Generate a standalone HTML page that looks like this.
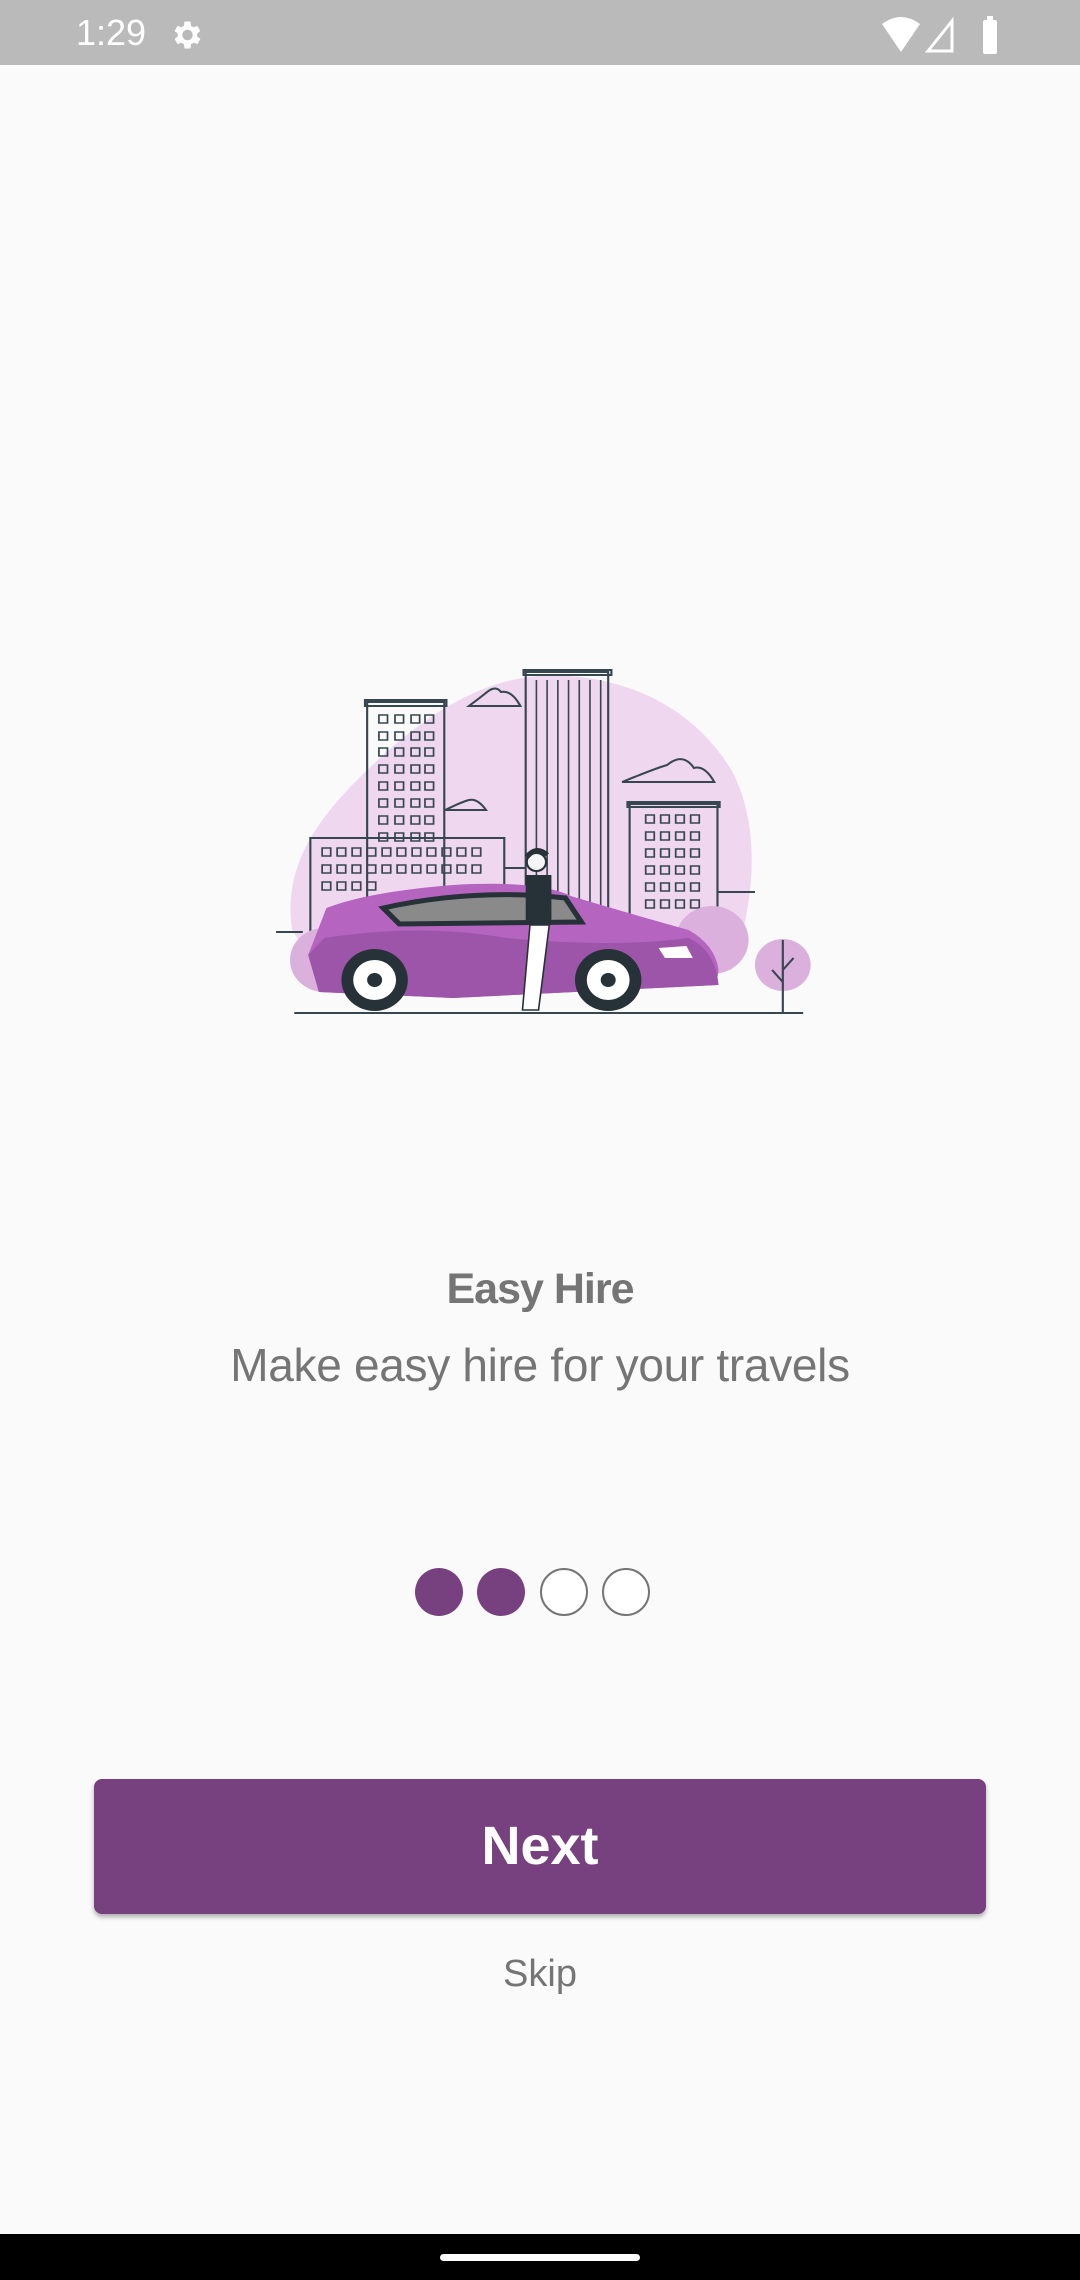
<!DOCTYPE html>
<html><head><meta charset="utf-8"><style>
*{margin:0;padding:0;box-sizing:border-box}
body{width:1080px;height:2280px;background:#fafafa;position:relative;overflow:hidden;font-family:"Liberation Sans",sans-serif}
.sb{position:absolute;left:0;top:0;width:1080px;height:65px;background:#bababa;color:#fff}
.t{position:absolute;text-align:center;width:1080px;left:0;color:#757575}
.dot{position:absolute;width:48px;height:48px;border-radius:50%;top:1568px}
.f{background:#77417f}
.e{background:#fff;border:2px solid #757575}
.btn{position:absolute;left:94px;top:1779px;width:892px;height:135px;background:#77417f;border-radius:8px;box-shadow:0 3px 5px rgba(0,0,0,.3);color:#fff;font-weight:bold;font-size:54px;text-align:center;line-height:135px}
.nav{position:absolute;left:0;top:2234px;width:1080px;height:46px;background:#000}
</style></head><body>
<div class="sb">
<div style="position:absolute;left:76px;top:12px;font-size:36px">1:29</div>
<svg style="position:absolute;left:168px;top:16px" width="36" height="38" viewBox="0 0 24 24"><path fill="#fff" d="M19.4 13a7.5 7.5 0 000-2l2.1-1.6-2-3.5-2.5 1a7 7 0 00-1.7-1L15 3h-4l-.4 2.9a7 7 0 00-1.7 1l-2.5-1-2 3.5L6.5 11a7.5 7.5 0 000 2l-2.1 1.6 2 3.5 2.5-1a7 7 0 001.7 1L11 21h4l.4-2.9a7 7 0 001.7-1l2.5 1 2-3.5zM13 15.5a3.5 3.5 0 110-7 3.5 3.5 0 010 7z"/></svg>
<svg style="position:absolute;left:880px;top:16px" width="125" height="40" viewBox="0 0 125 40"><path fill="#fff" d="M2 8Q21-6 40 8L21 36Z"/><path fill="none" stroke="#fff" stroke-width="3" d="M48 35L72 5V35Z"/><rect x="103" y="4" width="14" height="34" rx="2" fill="#fff"/><rect x="107" y="0" width="6" height="5" fill="#fff"/></svg>
</div>
<svg style="position:absolute;left:260px;top:640px" width="560" height="390" viewBox="0 0 522.7 390" preserveAspectRatio="none">
<path d="M30 290C20 220 60 170 110 120C160 70 210 40 260 36C330 32 400 60 440 130C470 190 460 270 440 330L60 340Z" fill="#efd7ef"/>
<g fill="none" stroke="#37474f" stroke-width="2">
<rect x="100" y="62" width="72" height="240"/><rect x="98" y="60" width="76" height="6"/>
<rect x="47" y="198" width="181" height="110"/>
<rect x="248" y="32" width="77" height="280"/><rect x="246" y="30" width="82" height="5"/>
<rect x="345" y="164" width="82" height="150"/><rect x="343" y="162" width="86" height="5"/>
<path d="M228 228H248M427 252H462M15 292H40"/>
<path d="M195 66H243Q235 50 225 52Q220 45 212 52Q205 58 195 66Z"/>
<path d="M173 170H211Q203 158 195 160Q188 162 173 170Z"/>
<path d="M338 142H424Q415 125 405 128Q395 112 380 125Q370 128 338 142Z"/>
</g>
<g stroke="#37474f" stroke-width="1.5" fill="none">
<path d="M258 40V300M268 40V300M278 40V300M288 40V300M298 40V300M308 40V300M318 40V300"/>
</g>
<g fill="none" stroke="#37474f" stroke-width="1.6">
<path d="M111 75h8v8h-8zM126 75h8v8h-8zM141 75h8v8h-8zM154 75h8v8h-8zM111 92h8v8h-8zM126 92h8v8h-8zM141 92h8v8h-8zM154 92h8v8h-8zM111 108h8v8h-8zM126 108h8v8h-8zM141 108h8v8h-8zM154 108h8v8h-8zM111 125h8v8h-8zM126 125h8v8h-8zM141 125h8v8h-8zM154 125h8v8h-8zM111 142h8v8h-8zM126 142h8v8h-8zM141 142h8v8h-8zM154 142h8v8h-8zM111 159h8v8h-8zM126 159h8v8h-8zM141 159h8v8h-8zM154 159h8v8h-8zM111 176h8v8h-8zM126 176h8v8h-8zM141 176h8v8h-8zM154 176h8v8h-8zM111 193h8v8h-8zM126 193h8v8h-8zM141 193h8v8h-8zM154 193h8v8h-8z"/>
<path d="M58 208h8v8h-8zM72 208h8v8h-8zM86 208h8v8h-8zM100 208h8v8h-8zM114 208h8v8h-8zM128 208h8v8h-8zM142 208h8v8h-8zM156 208h8v8h-8zM170 208h8v8h-8zM184 208h8v8h-8zM198 208h8v8h-8zM58 225h8v8h-8zM72 225h8v8h-8zM86 225h8v8h-8zM100 225h8v8h-8zM114 225h8v8h-8zM128 225h8v8h-8zM142 225h8v8h-8zM156 225h8v8h-8zM170 225h8v8h-8zM184 225h8v8h-8zM198 225h8v8h-8zM58 242h8v8h-8zM72 242h8v8h-8zM86 242h8v8h-8zM100 242h8v8h-8z"/>
<path d="M360 175h8v8h-8zM374 175h8v8h-8zM388 175h8v8h-8zM402 175h8v8h-8zM360 192h8v8h-8zM374 192h8v8h-8zM388 192h8v8h-8zM402 192h8v8h-8zM360 209h8v8h-8zM374 209h8v8h-8zM388 209h8v8h-8zM402 209h8v8h-8zM360 226h8v8h-8zM374 226h8v8h-8zM388 226h8v8h-8zM402 226h8v8h-8zM360 243h8v8h-8zM374 243h8v8h-8zM388 243h8v8h-8zM402 243h8v8h-8zM360 260h8v8h-8zM374 260h8v8h-8zM388 260h8v8h-8zM402 260h8v8h-8z"/>
</g>
<circle cx="60" cy="320" r="32" fill="#dcb0dc"/>
<circle cx="422" cy="300" r="34" fill="#dcb0dc"/>
<circle cx="488" cy="325" r="26" fill="#dcb0dc"/>
<path d="M488 300V372M488 330L498 318M488 342L478 330" stroke="#37474f" stroke-width="2"/>
<path d="M45 315L62 268Q100 252 180 245Q260 240 290 256Q340 272 400 290Q425 305 428 330L426 345L180 358L55 352Z" fill="#b565c0"/>
<path d="M45 315L60 298Q150 283 230 298Q330 308 400 298Q425 310 428 345L180 358L55 352Z" fill="#9c55a8"/>
<path d="M115 268Q200 248 285 258L300 282L130 284Z" fill="#8a8a8a" stroke="#263238" stroke-width="5"/>
<path d="M372 308L398 306L404 318L378 318Z" fill="#fff"/>
<rect x="248" y="235" width="24" height="50" fill="#263238"/>
<path d="M252 285L245 370L260 370L270 285Z" fill="#fff" stroke="#263238" stroke-width="1.5"/>
<circle cx="258" cy="222" r="9" fill="#f5f5f5" stroke="#263238" stroke-width="2"/>
<path d="M249 217Q258 205 268 215" stroke="#263238" stroke-width="5" fill="none"/>
<circle cx="107" cy="340" r="31" fill="#263238"/><circle cx="107" cy="340" r="20" fill="#fff"/><circle cx="107" cy="340" r="7" fill="#263238"/>
<circle cx="325" cy="340" r="31" fill="#263238"/><circle cx="325" cy="340" r="20" fill="#fff"/><circle cx="325" cy="340" r="7" fill="#263238"/>
<path d="M32 373H507" stroke="#37474f" stroke-width="2"/>
</svg>
<div class="t" style="top:1265px;font-size:43px;font-weight:bold;letter-spacing:-1px">Easy Hire</div>
<div class="t" style="top:1338px;font-size:46px;letter-spacing:-0.3px">Make easy hire for your travels</div>
<div class="dot f" style="left:415px"></div>
<div class="dot f" style="left:477px"></div>
<div class="dot e" style="left:540px"></div>
<div class="dot e" style="left:602px"></div>
<div class="btn">Next</div>
<div class="t" style="top:1953px;font-size:38px">Skip</div>
<div class="nav"><div style="position:absolute;left:440px;top:20px;width:200px;height:7px;border-radius:4px;background:#fff"></div></div>
</body></html>
